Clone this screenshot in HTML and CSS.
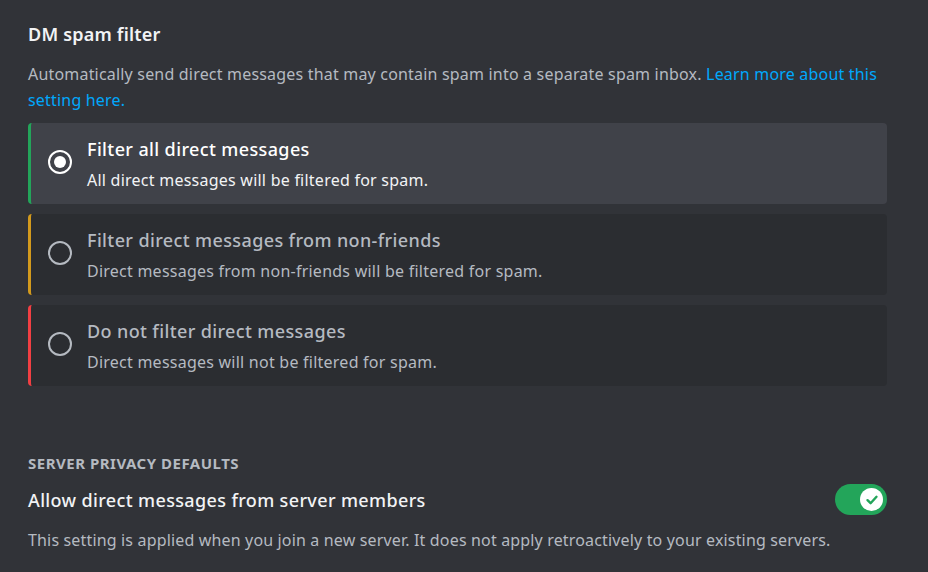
FILE: index.html
```html
<!DOCTYPE html>
<html>
<head>
<meta charset="utf-8">
<link rel="stylesheet" href="styles.css">
</head>
<body>
<div class="page">
  <h2 class="title">DM spam filter</h2>
  <p class="desc">Automatically send direct messages that may contain spam into a separate spam inbox. <a class="link" href="#">Learn more about this setting here.</a></p>
  <div class="options">
    <div class="option selected green">
      <span class="radio on"><span class="dot"></span></span>
      <div class="opt-text">
        <div class="opt-title">Filter all direct messages</div>
        <div class="opt-sub">All direct messages will be filtered for spam.</div>
      </div>
    </div>
    <div class="option yellow">
      <span class="radio"></span>
      <div class="opt-text">
        <div class="opt-title">Filter direct messages from non-friends</div>
        <div class="opt-sub">Direct messages from non-friends will be filtered for spam.</div>
      </div>
    </div>
    <div class="option red">
      <span class="radio"></span>
      <div class="opt-text">
        <div class="opt-title">Do not filter direct messages</div>
        <div class="opt-sub">Direct messages will not be filtered for spam.</div>
      </div>
    </div>
  </div>
  <h3 class="section">Server Privacy Defaults</h3>
  <div class="row">
    <div class="row-title">Allow direct messages from server members</div>
    <div class="toggle">
      <span class="knob">
        <svg width="14" height="14" viewBox="0 0 14 14"><path d="M2.5 7.2 L5.6 10.2 L11.5 3.8" fill="none" stroke="#23a55a" stroke-width="2.4" stroke-linecap="round" stroke-linejoin="round"/></svg>
      </span>
    </div>
  </div>
  <p class="note">This setting is applied when you join a new server. It does not apply retroactively to your existing servers.</p>
</div>
</body>
</html>
```
FILE: styles.css
```css
html, body {
  margin: 0;
  padding: 0;
  background: #313338;
}
body {
  font-family: "Noto Sans", "Open Sans", sans-serif;
  color: #b5bac1;
  width: 928px;
  height: 572px;
  overflow: hidden;
}
.page {
  padding: 22px 41px 0 28px;
}
.title {
  margin: 0;
  font-size: 18px;
  font-weight: 600;
  line-height: 24px;
  letter-spacing: 0.2px;
  color: #f2f3f5;
}
.desc {
  margin: 15px 0 0;
  font-size: 16px;
  line-height: 26px;
  letter-spacing: 0.19px;
  color: #b5bac1;
}
.link {
  color: #00a8fc;
  text-decoration: none;
}
.options {
  margin-top: 10px;
  display: flex;
  flex-direction: column;
  gap: 10px;
}
.option {
  height: 81px;
  box-sizing: border-box;
  background: #2b2d31;
  border-radius: 4px;
  border-left: 3px solid;
  display: flex;
  align-items: center;
  padding-left: 17px;
}
.option.selected { background: #404249; }
.green { border-left-color: #23a55a; }
.yellow { border-left-color: #d39a1d; }
.red { border-left-color: #f23f43; }
.radio {
  width: 24px;
  height: 24px;
  box-sizing: border-box;
  border: 2.5px solid #b5bac1;
  border-radius: 50%;
  display: flex;
  align-items: center;
  justify-content: center;
  flex: none;
  margin-bottom: 4px;
}
.radio.on { border-color: #ffffff; }
.dot {
  width: 12px;
  height: 12px;
  border-radius: 50%;
  background: #ffffff;
}
.opt-text {
  margin-left: 15px;
  display: flex;
  flex-direction: column;
  gap: 8px;
}
.opt-title {
  font-size: 18px;
  line-height: 24px;
  font-weight: 500;
  letter-spacing: 0.38px;
  color: #b5bac1;
}
.opt-sub {
  font-size: 16px;
  line-height: 22px;
  letter-spacing: 0.24px;
  color: #b5bac1;
}
.selected .opt-title { color: #ffffff; }
.selected .opt-sub { color: #f2f3f5; }
.section {
  margin: 68px 0 0;
  font-size: 15px;
  line-height: 18px;
  font-weight: 700;
  letter-spacing: 0.5px;
  text-transform: uppercase;
  color: #b5bac1;
}
.row {
  margin-top: 12px;
  display: flex;
  align-items: center;
  justify-content: space-between;
}
.row-title {
  font-size: 18px;
  line-height: 24px;
  font-weight: 500;
  letter-spacing: 0.36px;
  color: #f2f3f5;
}
.toggle {
  width: 52px;
  height: 31px;
  border-radius: 16px;
  background: #23a55a;
  display: flex;
  align-items: center;
  justify-content: flex-end;
  padding-right: 4px;
  box-sizing: border-box;
}
.knob {
  width: 23px;
  height: 23px;
  border-radius: 50%;
  background: #ffffff;
  display: flex;
  align-items: center;
  justify-content: center;
}
.note {
  margin: 14px 0 0;
  font-size: 16px;
  line-height: 22px;
  letter-spacing: 0.16px;
  color: #b5bac1;
}
```
